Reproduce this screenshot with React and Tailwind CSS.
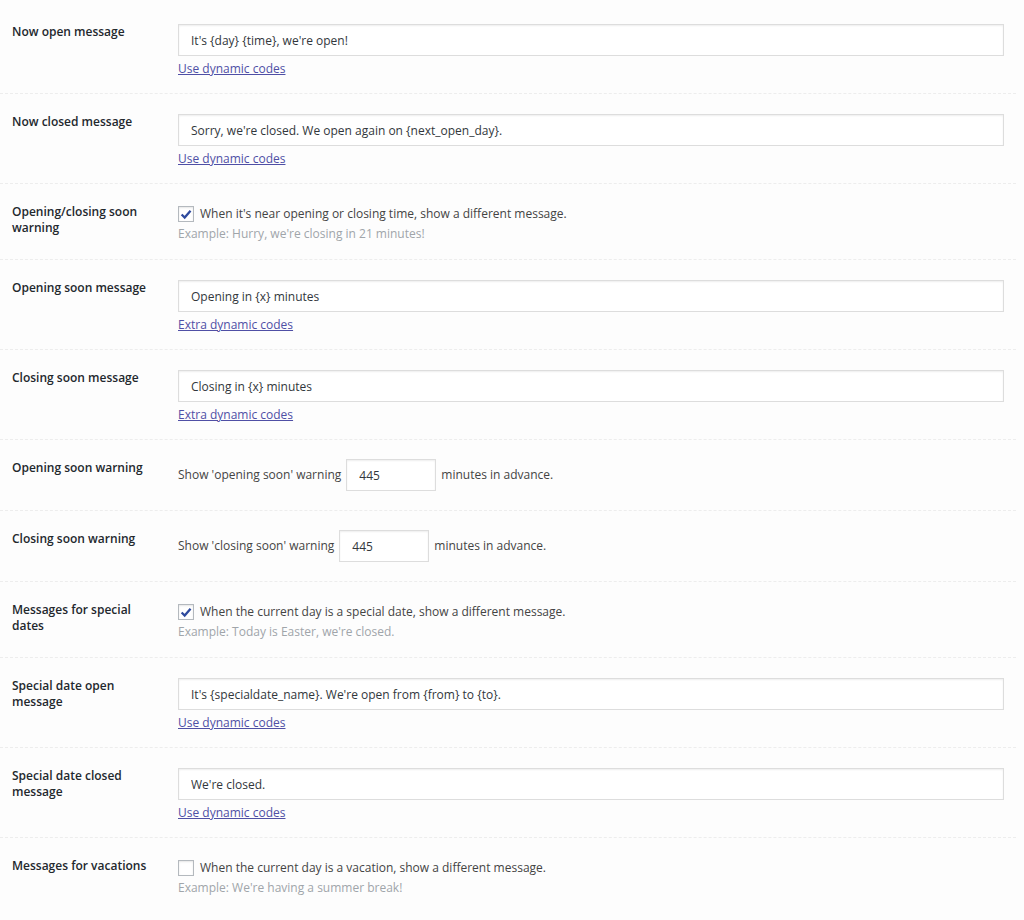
import React, { useState } from "react";

const font = { fontFamily: '"Open Sans", "Noto Sans", sans-serif' };

function TextRow({ label, value, link }) {
  const [val, setVal] = useState(value);
  return (
    <div className="flex border-b border-dashed border-[#ededed] pb-[14px] pt-5">
      <div className="w-[178px] shrink-0 pl-3 pr-6 text-[12px] font-semibold leading-[16px] text-[#23282d]">
        {label}
      </div>
      <div className="w-[826px]">
        <input
          className="h-8 w-full border border-[#dddddd] bg-white px-3 text-[12px] text-[#32373c] shadow-[inset_0_1px_2px_rgba(0,0,0,0.07)] outline-none"
          value={val}
          onChange={(e) => setVal(e.target.value)}
        />
        <a href="#" className="mt-[3px] block w-fit text-[12px] leading-[20px] text-[#4f4fa5] underline">
          {link}
        </a>
      </div>
    </div>
  );
}

function CheckRow({ label, text, example, checked }) {
  const [on, setOn] = useState(checked);
  return (
    <div className="flex border-b border-dashed border-[#ededed] pb-[15px] pt-5">
      <div className="w-[178px] shrink-0 pl-3 pr-6 text-[12px] font-semibold leading-[16px] text-[#23282d]">
        {label}
      </div>
      <div>
        <label className="flex h-5 items-center gap-[6px] text-[12px] text-[#444]">
          <span
            onClick={() => setOn((o) => !o)}
            className="flex h-4 w-4 items-center justify-center border border-[#b4b9be] bg-white shadow-[inset_0_1px_2px_rgba(0,0,0,0.1)]"
          >
            {on && (
              <svg viewBox="0 0 16 16" className="h-[15px] w-[15px]">
                <path d="M3 8 L6.5 11.5 L13.2 3.8" fill="none" stroke="#2e4a9e" strokeWidth="2.6" />
              </svg>
            )}
          </span>
          <span>{text}</span>
        </label>
        <div className="text-[12px] leading-[20px] text-[#a0a5aa]">{example}</div>
      </div>
    </div>
  );
}

function NumberRow({ label, before, value }) {
  const [val, setVal] = useState(value);
  return (
    <div className="flex border-b border-dashed border-[#ededed] py-[19px]">
      <div className="w-[178px] shrink-0 pl-3 pr-6 pt-[1px] text-[12px] font-semibold leading-[16px] text-[#23282d]">
        {label}
      </div>
      <div className="flex items-center text-[12px] text-[#444]">
        <span>{before}</span>
        <input
          className="mx-[5px] h-8 w-[90px] border border-[#dddddd] bg-white px-3 text-[12px] text-[#32373c] shadow-[inset_0_1px_2px_rgba(0,0,0,0.07)] outline-none"
          value={val}
          onChange={(e) => setVal(e.target.value)}
        />
        <span>minutes in advance.</span>
      </div>
    </div>
  );
}

export default function App() {
  return (
    <div className="min-h-[920px] w-[1024px] bg-[#fdfdfd] pr-[8px]" style={font}>
      <div className="pt-[4px]">
        <TextRow label="Now open message" value="It's {day} {time}, we're open!" link="Use dynamic codes" />
        <TextRow
          label="Now closed message"
          value="Sorry, we're closed. We open again on {next_open_day}."
          link="Use dynamic codes"
        />
        <CheckRow
          label="Opening/closing soon warning"
          text="When it's near opening or closing time, show a different message."
          example="Example: Hurry, we're closing in 21 minutes!"
          checked
        />
        <TextRow label="Opening soon message" value="Opening in {x} minutes" link="Extra dynamic codes" />
        <TextRow label="Closing soon message" value="Closing in {x} minutes" link="Extra dynamic codes" />
        <NumberRow label="Opening soon warning" before="Show 'opening soon' warning" value="445" />
        <NumberRow label="Closing soon warning" before="Show 'closing soon' warning" value="445" />
        <CheckRow
          label="Messages for special dates"
          text="When the current day is a special date, show a different message."
          example="Example: Today is Easter, we're closed."
          checked
        />
        <TextRow
          label="Special date open message"
          value="It's {specialdate_name}. We're open from {from} to {to}."
          link="Use dynamic codes"
        />
        <TextRow label="Special date closed message" value="We're closed." link="Use dynamic codes" />
        <div className="flex pt-5">
          <div className="w-[178px] shrink-0 pl-3 pr-6 text-[12px] font-semibold leading-[16px] text-[#23282d]">
            Messages for vacations
          </div>
          <div>
            <label className="flex h-5 items-center gap-[6px] text-[12px] text-[#444]">
              <span className="flex h-4 w-4 items-center justify-center border border-[#b4b9be] bg-white shadow-[inset_0_1px_2px_rgba(0,0,0,0.1)]" />
              <span>When the current day is a vacation, show a different message.</span>
            </label>
            <div className="text-[12px] leading-[20px] text-[#a0a5aa]">Example: We're having a summer break!</div>
          </div>
        </div>
      </div>
    </div>
  );
}
